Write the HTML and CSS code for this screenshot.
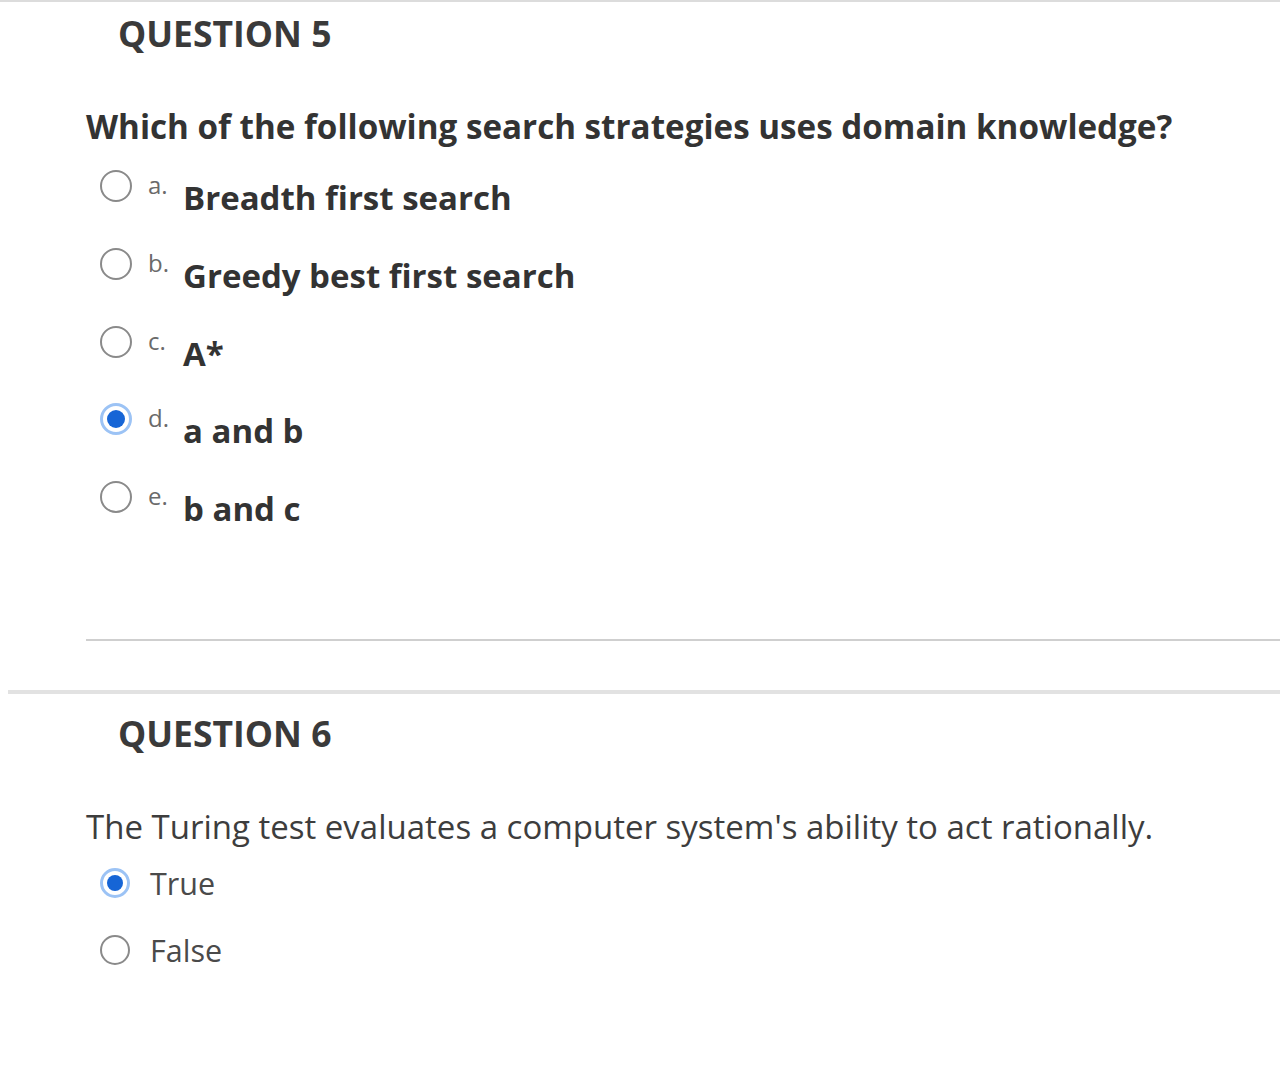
FILE: index.html
```html
<!DOCTYPE html>
<html lang="en">
<head>
<meta charset="utf-8">
<title>Quiz</title>
<link rel="stylesheet" href="styles.css">
</head>
<body>
<div class="top-rule"></div>
<section class="question q5">
  <h2 class="q-title">QUESTION 5</h2>
  <p class="q-text bold">Which of the following search strategies uses domain knowledge?</p>
  <ul class="options">
    <li class="opt"><span class="radio"></span><span class="letter">a.</span><span class="answer">Breadth first search</span></li>
    <li class="opt"><span class="radio"></span><span class="letter">b.</span><span class="answer">Greedy best first search</span></li>
    <li class="opt"><span class="radio"></span><span class="letter">c.</span><span class="answer">A*</span></li>
    <li class="opt"><span class="radio checked"></span><span class="letter">d.</span><span class="answer">a and b</span></li>
    <li class="opt"><span class="radio"></span><span class="letter">e.</span><span class="answer">b and c</span></li>
  </ul>
  <div class="inner-rule"></div>
</section>
<div class="outer-rule"></div>
<section class="question q6">
  <h2 class="q-title">QUESTION 6</h2>
  <p class="q-text">The Turing test evaluates a computer system's ability to act rationally.</p>
  <ul class="tf">
    <li class="tf-opt"><span class="radio checked"></span><span class="tf-label">True</span></li>
    <li class="tf-opt"><span class="radio"></span><span class="tf-label">False</span></li>
  </ul>
</section>
</body>
</html>
```
FILE: styles.css
```css
html, body {
  margin: 0;
  padding: 0;
  background: #ffffff;
}
body {
  font-family: "Open Sans", "Noto Sans", sans-serif;
  color: #353535;
  width: 1280px;
  height: 1066px;
  overflow: hidden;
}
.top-rule {
  height: 2px;
  background: #dcdcdc;
}
.question {
  padding-left: 86px;
}
.q-title {
  margin: 9px 0 0 32px;
  font-size: 35.5px;
  line-height: 44px;
  font-weight: 700;
  color: #3a3a3a;
}
.q-text {
  margin: 50px 0 0 0;
  font-size: 33px;
  line-height: 44px;
  font-weight: 400;
  color: #3d3d3d;
  letter-spacing: 0;
}
.q-text.bold {
  font-size: 33.2px;
  font-weight: 700;
  color: #333;
}
.options, .tf {
  list-style: none;
  margin: 0;
  padding: 0;
}
.options {
  margin-top: 21px;
  display: flex;
  flex-direction: column;
  gap: 29.75px;
}
.opt {
  display: flex;
  align-items: flex-start;
  height: 48px;
  padding-left: 14px;
}
.radio {
  box-sizing: border-box;
  width: 32px;
  height: 32px;
  border-radius: 50%;
  border: 2px solid #8a8a8a;
  background: #fff;
  flex: none;
  position: relative;
}
.radio.checked {
  border: 3px solid #9cc3f5;
  background: #fff;
}
.radio.checked::after {
  content: "";
  position: absolute;
  left: 4px;
  top: 4px;
  width: 18px;
  height: 18px;
  border-radius: 50%;
  background: #1665d6;
}
.letter {
  margin: 0 0 0 16px;
  font-size: 24px;
  line-height: 30px;
  color: #6a6a6a;
  width: 21px;
}
.answer {
  margin: 8px 0 0 14px;
  font-size: 33px;
  line-height: 40px;
  font-weight: 700;
  color: #333;
  letter-spacing: 0;
}
.inner-rule {
  margin-top: 110px;
  height: 2px;
  background: #cfcfcf;
}
.outer-rule {
  margin: 49px 0 0 8px;
  height: 4px;
  background: #e2e2e2;
}
.q6 .q-title {
  margin-top: 17px;
}
.q6 .q-text {
  margin-top: 50px;
}
.tf {
  margin-top: 19px;
  display: flex;
  flex-direction: column;
  gap: 37px;
}
.tf-opt {
  display: flex;
  align-items: center;
  height: 30px;
  padding-left: 14px;
}
.tf-opt .radio {
  width: 30px;
  height: 30px;
}
.tf-opt .radio.checked::after {
  width: 16px;
  height: 16px;
}
.tf-label {
  margin-left: 20px;
  font-size: 30.5px;
  line-height: 40px;
  color: #4a4a4a;
}
```
